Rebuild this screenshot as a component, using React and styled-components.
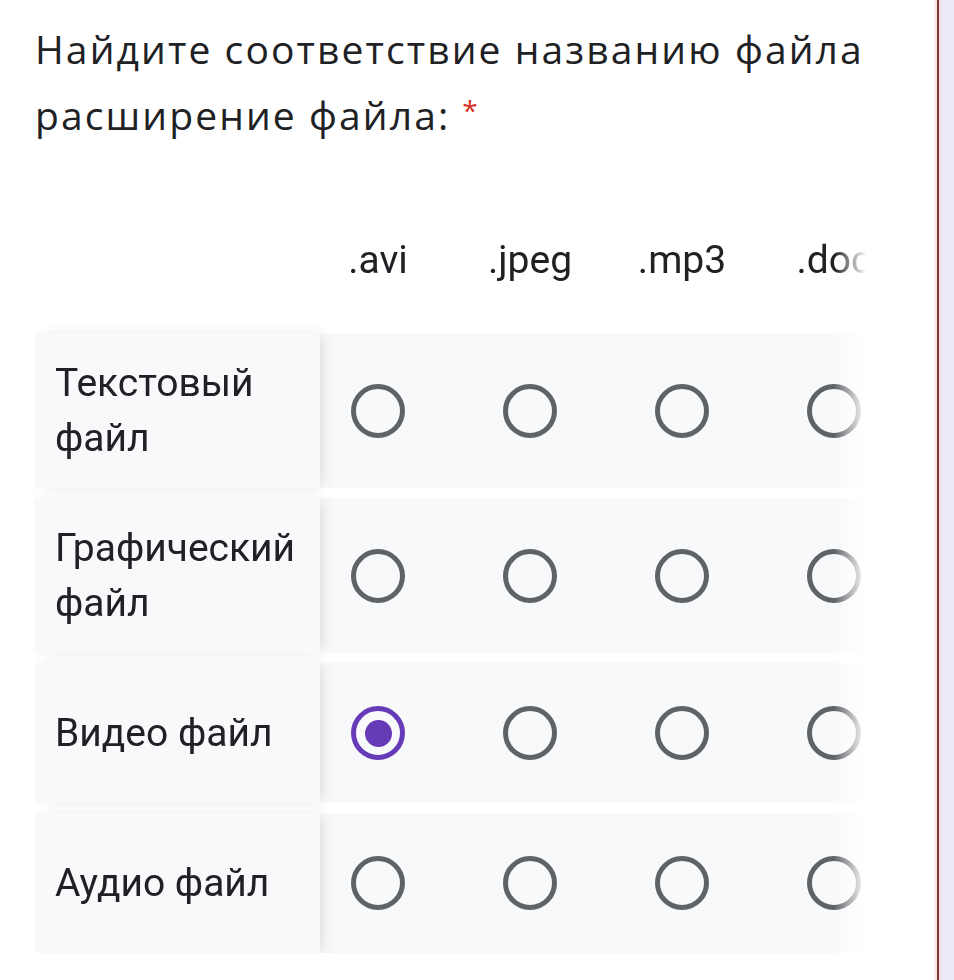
import React from "react";
import styled, { createGlobalStyle } from "styled-components";

const GlobalStyle = createGlobalStyle`
  html, body { margin: 0; padding: 0; background: #ffffff; }
  body { font-family: Roboto, "Liberation Sans", sans-serif; color: #202124; }
`;

const Page = styled.div`
  display: flex;
  width: 954px;
  height: 980px;
  overflow: hidden;
`;

const Card = styled.main`
  flex: none;
  width: 934px;
  padding: 16px 0 0 35px;
  box-sizing: border-box;
`;

const Edge = styled.div`
  flex: none;
  width: 20px;
  background: linear-gradient(
    to right,
    #fff4f4 0,
    #fbdcdc 3px,
    #7b3b3b 3px,
    #7b3b3b 5px,
    #f9dde3 5px,
    #f3e6f3 8px,
    #ece9f8 8px
  );
`;

const Title = styled.h1`
  margin: 0;
  font-family: "Open Sans", Roboto, sans-serif;
  font-weight: 400;
  font-size: 39px;
  letter-spacing: 2.1px;
  line-height: 66px;
  color: #202124;
  width: 880px;
`;

const Required = styled.span`
  color: #d93025;
  margin-left: 12px;
  font-size: 28px;
  line-height: 0;
  letter-spacing: 0;
  vertical-align: 9px;
`;

const Grid = styled.div`
  margin-top: 82px;
  width: 831px;
  overflow: hidden;
  -webkit-mask-image: linear-gradient(to right, #000 calc(100% - 32px), transparent);
  mask-image: linear-gradient(to right, #000 calc(100% - 32px), transparent);
  display: flex;
  flex-direction: column;
  gap: 10px;
`;

const HeaderRow = styled.div`
  display: flex;
  height: 60px;
  margin-bottom: 33px;
`;

const Spacer = styled.div`
  flex: none;
  width: 285px;
`;

const HeaderCell = styled.div`
  flex: none;
  width: 116px;
  margin-right: 36px;
  text-align: center;
  font-size: 39px;
  line-height: 60px;
  white-space: nowrap;
  color: #202124;
`;

const Row = styled.div`
  display: flex;
  width: 100%;
  height: ${(p) => p.$h}px;
  background: #f8f9fa;
`;

const Label = styled.div`
  flex: none;
  width: 285px;
  box-sizing: border-box;
  padding: 0 8px 0 20px;
  display: flex;
  align-items: center;
  background: #f8f9fa;
  position: relative;
  z-index: 1;
  box-shadow: 5px 0 12px -3px rgba(60, 64, 67, 0.16);
  font-size: 39px;
  line-height: 55px;
  color: #202124;
`;

const Cell = styled.div`
  flex: none;
  width: 116px;
  margin-right: 36px;
  display: flex;
  align-items: center;
  justify-content: center;
`;

const Radio = styled.div`
  width: 54px;
  height: 54px;
  box-sizing: border-box;
  border-radius: 50%;
  border: 5px solid ${(p) => (p.$checked ? "#673ab7" : "#5f6368")};
  display: flex;
  align-items: center;
  justify-content: center;
`;

const Dot = styled.div`
  width: 27px;
  height: 27px;
  border-radius: 50%;
  background: #673ab7;
`;

const columns = [".avi", ".jpeg", ".mp3", ".doc"];
const rows = [
  { label: "Текстовый файл", h: 155, checked: -1 },
  { label: "Графический файл", h: 155, checked: -1 },
  { label: "Видео файл", h: 140, checked: 0 },
  { label: "Аудио файл", h: 140, checked: -1 },
];

export default function App() {
  return (
    <>
      <GlobalStyle />
      <Page>
        <Card>
          <Title>
            Найдите соответствие названию файла расширение файла:
            <Required>*</Required>
          </Title>
          <Grid>
            <HeaderRow>
              <Spacer />
              {columns.map((c) => (
                <HeaderCell key={c}>{c}</HeaderCell>
              ))}
            </HeaderRow>
            {rows.map((r) => (
              <Row key={r.label} $h={r.h}>
                <Label>{r.label}</Label>
                {columns.map((c, i) => (
                  <Cell key={c}>
                    <Radio $checked={i === r.checked}>
                      {i === r.checked && <Dot />}
                    </Radio>
                  </Cell>
                ))}
              </Row>
            ))}
          </Grid>
        </Card>
        <Edge />
      </Page>
    </>
  );
}
